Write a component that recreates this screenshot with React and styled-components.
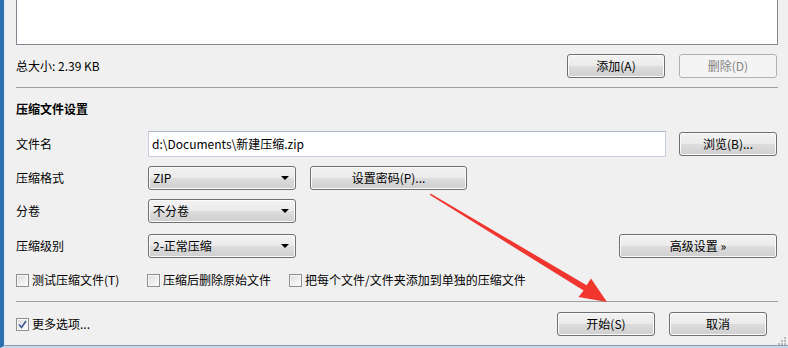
import React from 'react';
import styled, { createGlobalStyle, css } from 'styled-components';

const GlobalStyle = createGlobalStyle`
  html, body {
    margin: 0;
    padding: 0;
    background: #f0f0f0;
  }
  body {
    font-family: "Noto Sans CJK SC", "Noto Sans", sans-serif;
    font-size: 12px;
    color: #000;
  }
`;

const Window = styled.div`
  position: relative;
  width: 788px;
  height: 348px;
  box-sizing: border-box;
  overflow: hidden;
  display: flex;
  background: #f0f0f0;
  border-left: 4px solid #2e71b1;
  border-bottom: 2px solid #c9d9ea;
`;

const Body = styled.div`
  flex: 1;
  display: flex;
  flex-direction: column;
  box-sizing: border-box;
  padding: 0 10px 0 11px;
  border-left: 1px solid #e2eaf3;
  border-bottom: 1px solid #8a9cb0;
`;

const ListBox = styled.div`
  height: 45px;
  box-sizing: border-box;
  background: #fff;
  border: 1px solid #828790;
  border-top: none;
`;

const Row = styled.div`
  display: flex;
  align-items: center;
  height: ${({ h }) => h || 24}px;
  margin-top: ${({ mt }) => mt || 0}px;
  gap: ${({ gap }) => gap || 0}px;
`;

const Spacer = styled.div`
  flex: 1;
`;

const Text = styled.span`
  line-height: 16px;
  white-space: nowrap;
  color: ${({ muted }) => (muted ? '#838383' : '#000')};
`;

const Separator = styled.div`
  height: 1px;
  margin-top: ${({ mt }) => mt}px;
  background: #a0a0a0;
`;

const SectionTitle = styled.div`
  margin-top: 13px;
  line-height: 16px;
  font-weight: 700;
`;

const Label = styled.span`
  width: 132px;
  flex: none;
  line-height: 16px;
`;

const Button = styled.button`
  flex: none;
  width: ${({ w }) => w}px;
  height: 24px;
  box-sizing: border-box;
  padding: 0;
  margin-right: ${({ mr }) => mr || 0}px;
  font: inherit;
  line-height: 16px;
  color: #000;
  border: 1px solid #707070;
  border-radius: 3px;
  background: linear-gradient(#f2f2f2 0%, #ebebeb 50%, #dddddd 50%, #cfcfcf 100%);
  box-shadow: inset 0 0 0 1px #fbfbfb;
  ${({ disabled }) =>
    disabled &&
    css`
      color: #838383;
      border-color: #adb2b5;
      background: #f4f4f4;
      box-shadow: none;
    `}
`;

const Select = styled.div`
  position: relative;
  flex: none;
  width: 148px;
  height: 24px;
  box-sizing: border-box;
  display: flex;
  align-items: center;
  padding-left: 4px;
  line-height: 16px;
  border: 1px solid #707070;
  border-radius: 3px;
  background: linear-gradient(#f2f2f2 0%, #ebebeb 50%, #dddddd 50%, #cfcfcf 100%);
  box-shadow: inset 0 0 0 1px #fbfbfb;
`;

const Caret = styled.span`
  margin-left: auto;
  margin-right: 6px;
  width: 0;
  height: 0;
  border-left: 4px solid transparent;
  border-right: 4px solid transparent;
  border-top: 4px solid #000;
`;

const Input = styled.div`
  flex: none;
  width: 518px;
  height: 26px;
  box-sizing: border-box;
  display: flex;
  align-items: center;
  padding-left: 3px;
  background: #fff;
  border: 1px solid #c4cfdb;
  border-top-color: #abb7c5;
  line-height: 16px;
  white-space: nowrap;
`;

const CheckItem = styled.label`
  display: flex;
  align-items: center;
  gap: 3px;
  width: ${({ w }) => (w ? `${w}px` : 'auto')};
  flex: none;
  line-height: 16px;
  white-space: nowrap;
`;

const Box = styled.span`
  position: relative;
  width: 13px;
  height: 13px;
  box-sizing: border-box;
  border: 1px solid #8e8f8f;
  background: linear-gradient(135deg, #dcdcdc 0%, #f4f4f4 70%, #fff 100%);
  box-shadow: inset 0 0 0 1px #f7f7f7;
  display: flex;
  align-items: center;
  justify-content: center;
`;

const Overlay = styled.svg`
  position: absolute;
  left: -4px;
  top: 0;
  pointer-events: none;
`;

const Grip = styled.svg`
  position: absolute;
  right: 2px;
  bottom: 1px;
`;

function CheckBox({ checked, label, w }) {
  return (
    <CheckItem w={w}>
      <Box>
        {checked && (
          <svg width="9" height="9" viewBox="0 0 9 9">
            <path d="M1 4.5 L3.5 7.5 L8 1" fill="none" stroke="#3c5a9a" strokeWidth="1.6" />
          </svg>
        )}
      </Box>
      {label}
    </CheckItem>
  );
}

export default function App() {
  return (
    <>
      <GlobalStyle />
      <Window>
        <Body>
          <ListBox />
          <Row mt={9}>
            <Text>总大小: 2.39 KB</Text>
            <Spacer />
            <Button w={98}>添加(A)</Button>
            <Button w={98} disabled style={{ marginLeft: 14 }} mr={1}>
              删除(D)
            </Button>
          </Row>
          <Separator mt={9} />
          <SectionTitle>压缩文件设置</SectionTitle>
          <Row mt={14} h={26}>
            <Label>文件名</Label>
            <Input>d:\Documents\新建压缩.zip</Input>
            <Spacer />
            <Button w={98} mr={1}>浏览(B)...</Button>
          </Row>
          <Row mt={9}>
            <Label>压缩格式</Label>
            <Select>
              ZIP
              <Caret />
            </Select>
            <Button w={157} style={{ marginLeft: 14 }}>设置密码(P)...</Button>
          </Row>
          <Row mt={9}>
            <Label>分卷</Label>
            <Select>
              不分卷
              <Caret />
            </Select>
          </Row>
          <Row mt={11}>
            <Label>压缩级别</Label>
            <Select>
              2-正常压缩
              <Caret />
            </Select>
            <Spacer />
            <Button w={158} mr={1}>高级设置 »</Button>
          </Row>
          <Row mt={14} h={16}>
            <CheckBox w={131} label="测试压缩文件(T)" />
            <CheckBox w={142} label="压缩后删除原始文件" />
            <CheckBox label="把每个文件/文件夹添加到单独的压缩文件" />
          </Row>
          <Separator mt={13} />
          <Row mt={10}>
            <CheckBox checked label="更多选项..." />
            <Spacer />
            <Button w={98}>开始(S)</Button>
            <Button w={98} style={{ marginLeft: 14 }} mr={11}>
              取消
            </Button>
          </Row>
        </Body>
        <Grip width="8" height="8" viewBox="0 0 8 8">
          <g fill="#b8b8b8">
            <rect x="6" y="0" width="2" height="2" />
            <rect x="3" y="3" width="2" height="2" />
            <rect x="6" y="3" width="2" height="2" />
            <rect x="0" y="6" width="2" height="2" />
            <rect x="3" y="6" width="2" height="2" />
            <rect x="6" y="6" width="2" height="2" />
          </g>
        </Grip>
        <Overlay width="788" height="348" viewBox="0 0 788 348">
          <polygon
            fill="#f0362e"
            points="430.5,193.5 586.6,285.2 591,278.5 607,302 578.5,297 583.6,290.6 430,195"
          />
        </Overlay>
      </Window>
    </>
  );
}
